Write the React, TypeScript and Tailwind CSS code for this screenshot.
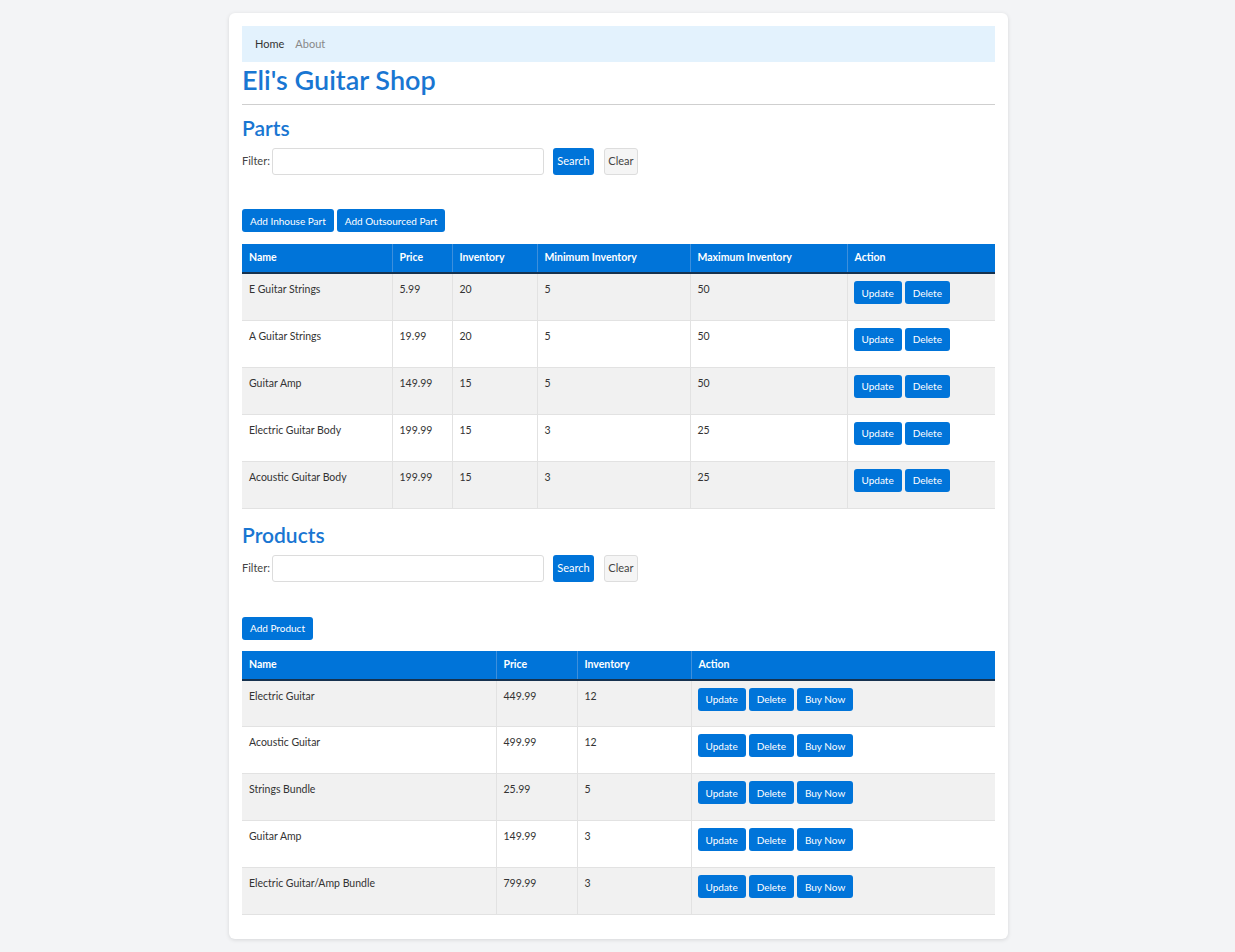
import React from 'react';

type Part = {
  name: string;
  price: string;
  inv: number;
  min: number;
  max: number;
};

type Product = {
  name: string;
  price: string;
  inv: number;
};

const parts: Part[] = [
  { name: 'E Guitar Strings', price: '5.99', inv: 20, min: 5, max: 50 },
  { name: 'A Guitar Strings', price: '19.99', inv: 20, min: 5, max: 50 },
  { name: 'Guitar Amp', price: '149.99', inv: 15, min: 5, max: 50 },
  { name: 'Electric Guitar Body', price: '199.99', inv: 15, min: 3, max: 25 },
  { name: 'Acoustic Guitar Body', price: '199.99', inv: 15, min: 3, max: 25 },
];

const products: Product[] = [
  { name: 'Electric Guitar', price: '449.99', inv: 12 },
  { name: 'Acoustic Guitar', price: '499.99', inv: 12 },
  { name: 'Strings Bundle', price: '25.99', inv: 5 },
  { name: 'Guitar Amp', price: '149.99', inv: 3 },
  { name: 'Electric Guitar/Amp Bundle', price: '799.99', inv: 3 },
];

const BlueButton = ({ children }: { children: React.ReactNode }) => (
  <button className="h-[23px] px-[8px] rounded-[3px] bg-[#0074d9] text-white text-[10px] leading-none">
    {children}
  </button>
);

const FilterBar = () => (
  <div className="flex items-center mt-[8px]">
    <label className="text-[11px] text-[#444]">Filter:</label>
    <input
      type="text"
      className="ml-[2px] w-[272px] h-[27px] border border-[#dcdcdc] rounded-[3px] bg-white"
    />
    <button className="ml-[9px] h-[27px] w-[41px] rounded-[3px] bg-[#0074d9] text-white text-[11px]">
      Search
    </button>
    <button className="ml-[10px] h-[27px] w-[34px] rounded-[3px] bg-[#f5f5f5] border border-[#dddddd] text-[#444] text-[11px]">
      Clear
    </button>
  </div>
);

const Th = ({ children, w }: { children: React.ReactNode; w: string }) => (
  <th
    className={`${w} h-[29px] px-[7px] text-left text-[10.5px] font-bold text-white border-r border-[#3d8fdc] last:border-r-0 border-b-2 border-b-[#16324f]`}
  >
    {children}
  </th>
);

const Td = ({ children }: { children: React.ReactNode }) => (
  <td className="h-[47px] px-[7px] pt-[8px] align-top text-[10.5px] text-[#333] border-r border-[#e2e2e2] last:border-r-0">
    {children}
  </td>
);

export default function App() {
  return (
    <div
      className="min-h-[952px] bg-[#f3f4f6] pt-[13px] pb-[12px]"
      style={{ fontFamily: 'Lato, "Noto Sans", sans-serif' }}
    >
      <div className="ml-[229px] w-[779px] bg-white rounded-[6px] shadow-[0_1px_4px_rgba(0,0,0,0.12)] px-[13px] pt-[13px] pb-[24px]">
        <nav className="h-[36px] bg-[#e3f2fd] flex items-center gap-[11px] px-[13px] text-[11px]">
          <span className="text-[#333]">Home</span>
          <span className="text-[#888]">About</span>
        </nav>

        <h1 className="mt-[1px] text-[27px] font-semibold text-[#1976d2] leading-[34px]">
          Eli&apos;s Guitar Shop
        </h1>
        <hr className="mt-[7px] border-t border-[#cfcfcf]" />

        {/* Parts */}
        <h2 className="mt-[11px] text-[21px] font-semibold text-[#1976d2] leading-[24px]">Parts</h2>
        <FilterBar />
        <div className="flex gap-[3px] mt-[34px]">
          <BlueButton>Add Inhouse Part</BlueButton>
          <BlueButton>Add Outsourced Part</BlueButton>
        </div>

        <table className="mt-[12px] w-full border-collapse table-fixed">
          <thead className="bg-[#0074d9]">
            <tr>
              <Th w="w-[150px]">Name</Th>
              <Th w="w-[60px]">Price</Th>
              <Th w="w-[85px]">Inventory</Th>
              <Th w="w-[153px]">Minimum Inventory</Th>
              <Th w="w-[157px]">Maximum Inventory</Th>
              <Th w="w-[148px]">Action</Th>
            </tr>
          </thead>
          <tbody>
            {parts.map((p, i) => (
              <tr key={p.name} className={`${i % 2 === 0 ? 'bg-[#f1f1f1]' : 'bg-white'} border-b border-[#e2e2e2]`}>
                <Td>{p.name}</Td>
                <Td>{p.price}</Td>
                <Td>{p.inv}</Td>
                <Td>{p.min}</Td>
                <Td>{p.max}</Td>
                <td className="h-[47px] px-[6px] align-top pt-[7px]">
                  <div className="flex gap-[3px]">
                    <BlueButton>Update</BlueButton>
                    <BlueButton>Delete</BlueButton>
                  </div>
                </td>
              </tr>
            ))}
          </tbody>
        </table>

        {/* Products */}
        <h2 className="mt-[14px] text-[21px] font-semibold text-[#1976d2] leading-[24px]">Products</h2>
        <FilterBar />
        <div className="flex gap-[3px] mt-[35px]">
          <BlueButton>Add Product</BlueButton>
        </div>

        <table className="mt-[11px] w-full border-collapse table-fixed">
          <thead className="bg-[#0074d9]">
            <tr>
              <Th w="w-[254px]">Name</Th>
              <Th w="w-[81px]">Price</Th>
              <Th w="w-[114px]">Inventory</Th>
              <Th w="w-[304px]">Action</Th>
            </tr>
          </thead>
          <tbody>
            {products.map((p, i) => (
              <tr key={p.name} className={`${i % 2 === 0 ? 'bg-[#f1f1f1]' : 'bg-white'} border-b border-[#e2e2e2]`}>
                <Td>{p.name}</Td>
                <Td>{p.price}</Td>
                <Td>{p.inv}</Td>
                <td className="h-[47px] px-[6px] align-top pt-[7px]">
                  <div className="flex gap-[3px]">
                    <BlueButton>Update</BlueButton>
                    <BlueButton>Delete</BlueButton>
                    <BlueButton>Buy Now</BlueButton>
                  </div>
                </td>
              </tr>
            ))}
          </tbody>
        </table>
      </div>
    </div>
  );
}
